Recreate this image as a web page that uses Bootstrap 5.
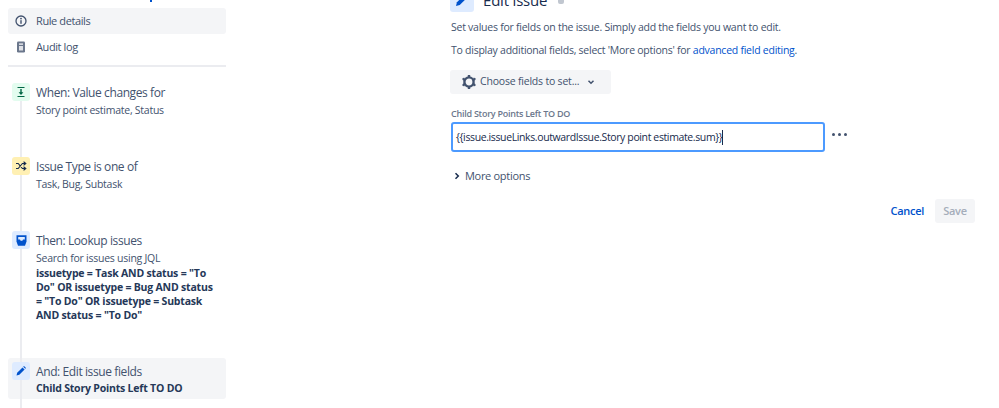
<!DOCTYPE html>
<html lang="en">
<head>
<meta charset="utf-8">
<title>Edit issue</title>
<link href="https://cdn.jsdelivr.net/npm/bootstrap@5.3.0/dist/css/bootstrap.min.css" rel="stylesheet">
<style>
html,body{height:408px;overflow:hidden;background:#fff}
body{font-family:"Open Sans","Noto Sans",sans-serif;font-size:10.5px;color:#42526e;letter-spacing:-.25px}
.shell{height:408px;overflow:hidden}
.leftcol{width:218px;margin-left:8px;padding-top:8px;flex:none;position:relative}
.navrow{height:26px;padding-left:6px;gap:8px;border-radius:3px;color:#42526e;font-size:11px;letter-spacing:-.4px}
.navrow.on{background:#f4f5f7}
.navrow svg{flex:none}
.sep{height:2px;background:#ebecf0;margin-top:5px;margin-bottom:16px}
.rail{position:absolute;left:12px;top:83px;bottom:-10px;width:2px;background:#ebecf0;z-index:1}
.step{display:flex;gap:6px;padding:0 4px;position:relative}
.tile{width:18px;height:18px;border-radius:3px;flex:none;display:flex;align-items:center;justify-content:center;position:relative;z-index:2}
.t-green{background:#e3fcef}.t-yellow{background:#fff0b3}.t-blue{background:#deebff}
.stxt{padding-top:1px}
.stitle{font-size:12px;line-height:18px;color:#42526e;letter-spacing:-.4px}
.ssub{line-height:15px;margin-top:1px;font-size:10.5px}
.sbold{font-weight:700;color:#253858;line-height:14px;font-size:10.5px;max-width:180px;letter-spacing:-.2px}
.s1{height:74px}.s2{height:74px}.s3{height:127px}
.s4{background:#f4f5f7;border-radius:3px;height:41px;padding-top:4px}
.maincol{margin-left:224px;width:525px;flex:none}
.headrow{margin-top:-13px;height:26px;gap:9px}
.bigtile{width:24px;height:24px;border-radius:3px;background:#deebff;display:flex;align-items:center;justify-content:center}
.htitle{font-size:15px;font-weight:500;color:#172b4d;margin:0;letter-spacing:-.2px}
.pin{width:6px;height:4px;background:#c1c7d0;border-radius:0 0 2px 2px;margin-left:2px;align-self:flex-start;margin-top:13px}
.para{margin:0;line-height:14px;padding-left:1px}
.adv{color:#0052cc;text-decoration:none}
.pickbtn{background:#f4f5f7;border:0;border-radius:3px;height:24px;width:161px;padding:0 11px;color:#42526e;font-size:10.5px;font-weight:500;gap:3px;white-space:nowrap;letter-spacing:-.2px;margin-top:13px}
.flabel{font-size:9px;font-weight:600;color:#6b778c;line-height:12px;margin-top:14px;padding-left:1px;letter-spacing:-.25px}
.fieldrow{margin-top:2px}
.finput{width:374px;margin-left:1px;height:30px;border:2px solid #4c9aff;border-radius:3px;padding:0 3px;color:#172b4d;font-size:10.5px;line-height:26px;background:#fff;display:flex;align-items:center;letter-spacing:-.38px}
.caret{display:inline-block;width:1px;height:15px;background:#172b4d}
.dots{margin-left:7px;gap:3px;margin-bottom:6px}
.dots i{display:block;width:3px;height:3px;border-radius:50%;background:#42526e}
.moreopt{gap:4px;margin-top:16px;font-weight:500;height:16px;padding-left:3px;color:#42526e;font-size:11px;letter-spacing:-.3px}
.actions{margin-top:15px;gap:11px;justify-content:flex-end;font-size:10.5px}
.canc{color:#0052cc;font-weight:600;background:none;border:0;padding:0;font-size:11px;letter-spacing:-.28px}
.savebtn{background:#f4f5f7;color:#a5adba;font-weight:600;border:0;border-radius:3px;width:40px;height:24px;padding:0;font-size:11px;letter-spacing:-.28px}
.topcut{position:absolute;left:142px;top:0;width:2px;height:2px;background:#0052cc}
</style>
</head>
<body>
<div class="shell d-flex">
  <aside class="leftcol">
    <span class="topcut"></span>
    <div class="rail"></div>
    <div class="navrow on d-flex align-items-center">
      <svg width="14" height="14" viewBox="0 0 14 14"><circle cx="7" cy="7" r="5" fill="none" stroke="#42526e" stroke-width="1.300"/><rect x="6.300" y="6.200" width="1.400" height="3.600" fill="#42526e"/><circle cx="7" cy="4.600" r=".9" fill="#42526e"/></svg>
      <span>Rule details</span>
    </div>
    <div class="navrow d-flex align-items-center">
      <svg width="14" height="14" viewBox="0 0 14 14"><rect x="3" y="1.500" width="8" height="11" rx="1.200" fill="#6b778c"/><rect x="5" y="3.500" width="4" height="1.200" fill="#fff"/><rect x="5" y="6" width="4" height="4.500" fill="#dfe1e6"/></svg>
      <span>Audit log</span>
    </div>
    <div class="sep"></div>
    <div class="step s1">
      <div class="tile t-green"><svg width="12" height="12" viewBox="0 0 12 12"><path d="M2.500 1.500h7M2.500 10.500h7" stroke="#006644" stroke-width="1.200"/><path d="M6 3v4" stroke="#006644" stroke-width="1.400"/><path d="M3.600 6.200h4.800L6 9z" fill="#006644"/></svg></div>
      <div class="stxt"><div class="stitle">When: Value changes for</div><div class="ssub">Story point estimate, Status</div></div>
    </div>
    <div class="step s2">
      <div class="tile t-yellow"><svg width="12" height="12" viewBox="0 0 12 12" fill="none" stroke="#172b4d" stroke-width="1.100"><path d="M1 3.500h2.200l4.200 5H10M1 8.500h2.200l4.200-5H10"/><path d="M9.200 2.200l1.600 1.300-1.600 1.300zM9.200 7.200l1.600 1.300-1.600 1.300z" fill="#172b4d"/></svg></div>
      <div class="stxt"><div class="stitle">Issue Type is one of</div><div class="ssub">Task, Bug, Subtask</div></div>
    </div>
    <div class="step s3">
      <div class="tile t-blue"><svg width="13" height="13" viewBox="0 0 13 13"><path d="M1.500 1.200h10v6.300l-1.500 4.300H3L1.500 7.500z" fill="#0052cc"/><path d="M3.200 3h6.600v2.600H8L7.400 6.700H5.600L5 5.600H3.200z" fill="#deebff"/></svg></div>
      <div class="stxt"><div class="stitle">Then: Lookup issues</div><div class="ssub">Search for issues using JQL</div>
      <div class="sbold">issuetype = Task AND status = "To Do" OR issuetype = Bug AND status = "To Do" OR issuetype = Subtask AND status = "To Do"</div></div>
    </div>
    <div class="step s4">
      <div class="tile t-blue"><svg width="12" height="12" viewBox="0 0 12 12"><path d="M1.500 10.500l.7-2.800 5.300-5.300 2.100 2.100-5.300 5.300z" fill="#0052cc"/><path d="M8.200 1.700l.8-.7 2 2-.7.800z" fill="#0052cc"/></svg></div>
      <div class="stxt"><div class="stitle">And: Edit issue fields</div><div class="sbold">Child Story Points Left TO DO</div></div>
    </div>
  </aside>
  <main class="maincol">
    <div class="headrow d-flex align-items-center">
      <div class="bigtile"><svg width="16" height="16" viewBox="0 0 12 12"><path d="M1.500 10.500l.7-2.800 5.300-5.300 2.100 2.100-5.300 5.300z" fill="#0052cc"/><path d="M8.200 1.700l.8-.7 2 2-.7.800z" fill="#0052cc"/></svg></div>
      <h1 class="htitle">Edit issue</h1><span class="pin"></span>
    </div>
    <p class="para" style="margin-top:7px">Set values for fields on the issue. Simply add the fields you want to edit.</p>
    <p class="para" style="margin-top:9px">To display additional fields, select 'More options' for <a class="adv" href="#">advanced field editing</a>.</p>
    <button class="pickbtn d-flex align-items-center" type="button">
      <svg width="16" height="16" viewBox="0 0 16 16"><circle cx="8" cy="8" r="4.600" fill="none" stroke="#42526e" stroke-width="2.400"/><g fill="#42526e"><rect x="6.800" y="1" width="2.400" height="2.500"/><rect x="6.800" y="12.500" width="2.400" height="2.500"/><rect x="1.500" y="4" width="2.400" height="2.400" transform="rotate(-30 2.700 5.200)"/><rect x="12.100" y="4" width="2.400" height="2.400" transform="rotate(30 13.300 5.200)"/><rect x="1.500" y="9.600" width="2.400" height="2.400" transform="rotate(30 2.700 10.800)"/><rect x="12.100" y="9.600" width="2.400" height="2.400" transform="rotate(-30 13.300 10.800)"/></g></svg>
      <span>Choose fields to set...</span>
      <svg class="ms-1" width="10" height="10" viewBox="0 0 10 10"><path d="M2.500 3.800L5 6.200l2.500-2.400" fill="none" stroke="#42526e" stroke-width="1.500"/></svg>
    </button>
    <div class="flabel">Child Story Points Left TO DO</div>
    <div class="fieldrow d-flex align-items-center">
      <div class="finput"><span>{{issue.issueLinks.outwardIssue.Story point estimate.sum}}</span><span class="caret"></span></div>
      <div class="dots d-flex"><i></i><i></i><i></i></div>
    </div>
    <div class="moreopt d-flex align-items-center">
      <svg width="8" height="8" viewBox="0 0 8 8"><path d="M2.500 1.200L5.300 4 2.500 6.800" fill="none" stroke="#172b4d" stroke-width="1.500"/></svg><span>More options</span>
    </div>
    <div class="actions d-flex align-items-center">
      <button class="canc" type="button">Cancel</button><button class="savebtn" type="button">Save</button>
    </div>
  </main>
</div>
</body>
</html>
